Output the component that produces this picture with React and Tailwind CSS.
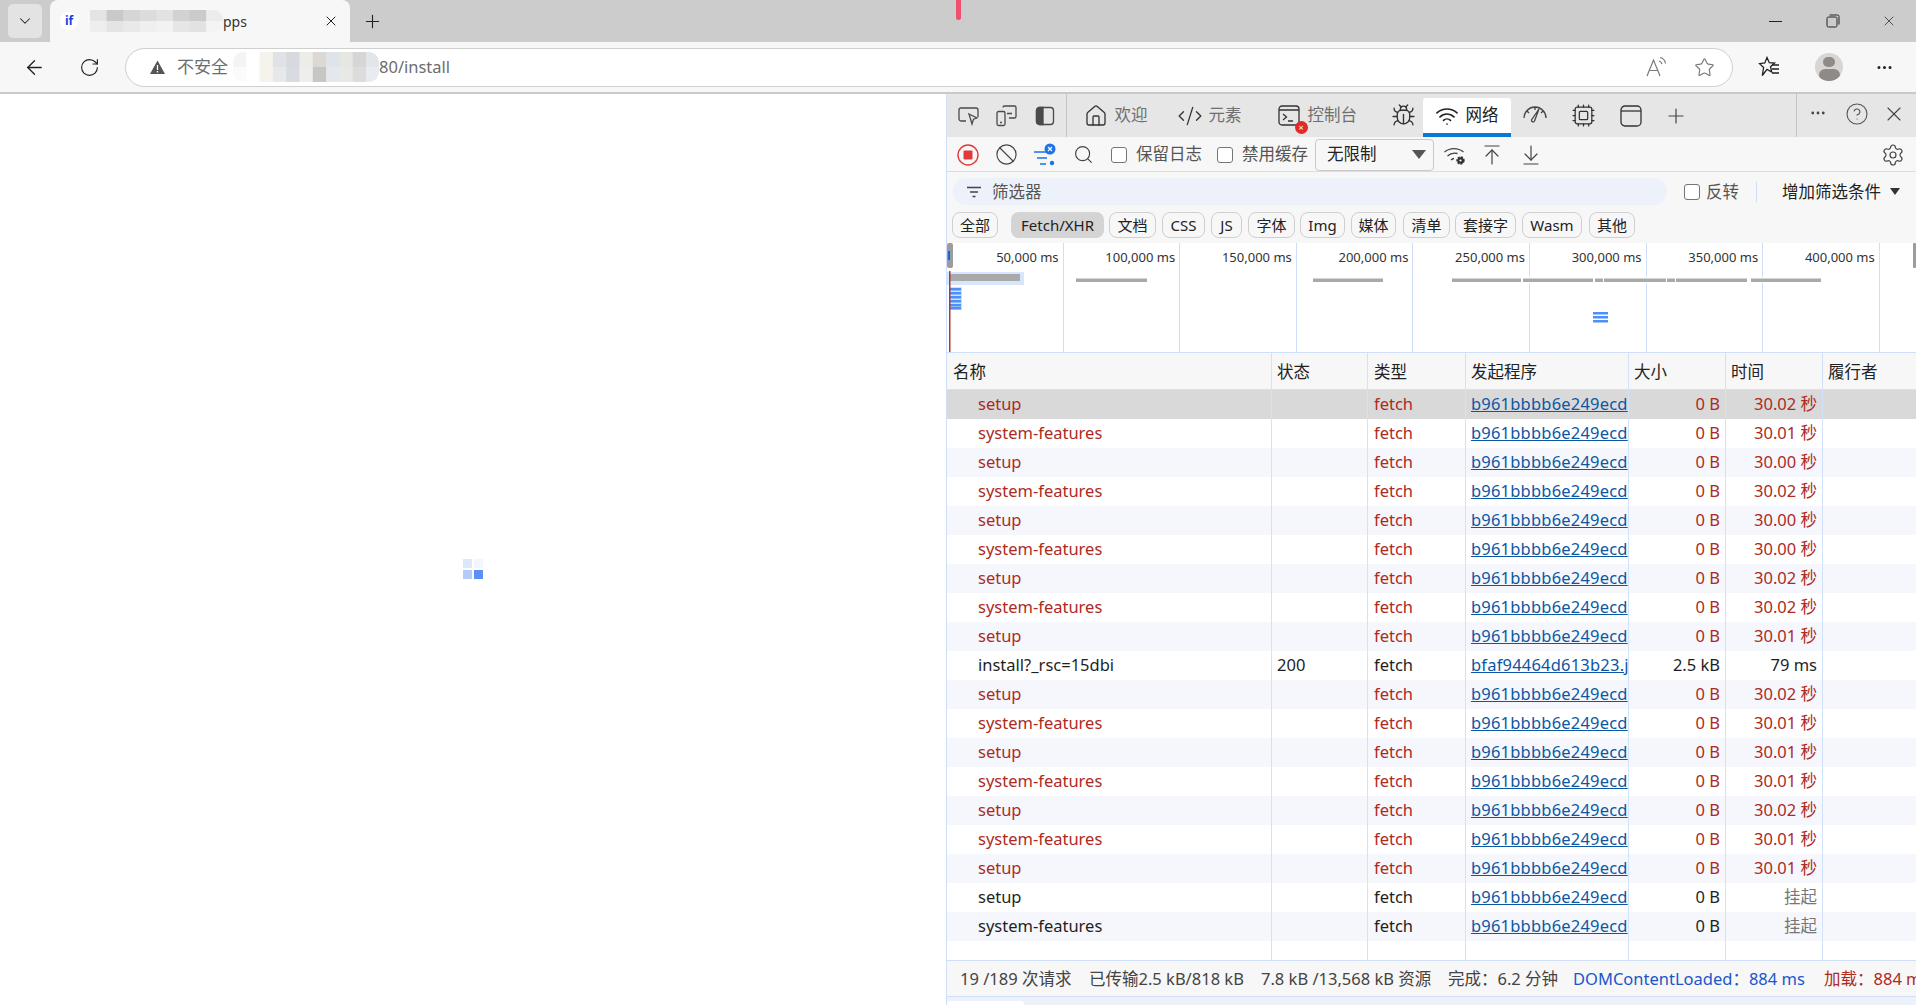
import {
  ArrowLeft,
  ArrowDownToLine,
  ArrowUpToLine,
  Ban,
  Bug,
  ChevronDown,
  CircleHelp,
  CodeXml,
  Cpu,
  Ellipsis,
  House,
  Plus,
  RotateCw,
  Search,
  Settings,
  Star,
  Wifi,
  X,
} from 'lucide-react';

const font = 'font-["Noto_Sans","Noto_Sans_CJK_SC",sans-serif]';

const rows = [
  ['setup', '30.02 秒'],
  ['system-features', '30.01 秒'],
  ['setup', '30.00 秒'],
  ['system-features', '30.02 秒'],
  ['setup', '30.00 秒'],
  ['system-features', '30.00 秒'],
  ['setup', '30.02 秒'],
  ['system-features', '30.02 秒'],
  ['setup', '30.01 秒'],
  ['install?_rsc=15dbi', '79 ms', 'ok'],
  ['setup', '30.02 秒'],
  ['system-features', '30.01 秒'],
  ['setup', '30.01 秒'],
  ['system-features', '30.01 秒'],
  ['setup', '30.02 秒'],
  ['system-features', '30.01 秒'],
  ['setup', '30.01 秒'],
  ['setup', '挂起', 'pending'],
  ['system-features', '挂起', 'pending'],
];

const chips = [
  ['全部', 'w-[46px]'],
  ['Fetch/XHR', 'w-[93px] ml-[13px]'],
  ['文档', 'w-[47px] ml-[5px]'],
  ['CSS', 'w-[43px] ml-[6px]'],
  ['JS', 'w-[31px] ml-[6px]'],
  ['字体', 'w-[47px] ml-[6px]'],
  ['Img', 'w-[45px] ml-[5px]'],
  ['媒体', 'w-[45px] ml-[6px]'],
  ['清单', 'w-[47px] ml-[7px]'],
  ['套接字', 'w-[61px] ml-[5px]'],
  ['Wasm', 'w-[60px] ml-[6px]'],
  ['其他', 'w-[46px] ml-[7px]'],
];

const ticks = ['50,000', '100,000', '150,000', '200,000', '250,000', '300,000', '350,000', '400,000'];

const grayBars = [
  [129, 71], [366, 70], [505, 69], [576, 70], [648, 8], [657, 62], [720, 8], [729, 71], [804, 70],
];

// mosaic colours standing in for the blurred bits of the screenshot
const tabMosaic = [
  ['#e4e4e4', '#c9c9c9', '#d6d6d6', '#dcdcdc', '#e2e2e2', '#d2d2d2', '#cbcbcb', '#ececec'],
  ['#eeeeee', '#e4e4e4', '#e9e9e9', '#efefef', '#f2f2f2', '#e6e6e6', '#e2e2e2', '#f4f4f4'],
];
const urlMosaic = [
  ['#f4f4f4', '#ffffff', '#f6f3ee', '#dfe2e6', '#d6dade', '#ecece8', '#dcd8d4', '#dfe4e8', '#e6e6e2', '#d6d6d6', '#e2e6ea'],
  ['#fbfbfb', '#ffffff', '#f6f2ec', '#e6e8ea', '#d8dce0', '#eeeeec', '#c8c6c4', '#e4e8ec', '#e8e8e6', '#dcdcdc', '#e8ecf0'],
];

const Mosaic = ({ data, width, height, cell }) => (
  <svg width={width} height={height} className="shrink-0">
    {data.map((line, y) =>
      line.map((fill, x) => (
        <rect key={`${x}-${y}`} x={x * cell} y={(y * height) / data.length} width={cell + 1} height={height / data.length + 1} fill={fill} />
      ))
    )}
  </svg>
);

const Check = ({ className = '' }) => (
  <span className={`w-4 h-4 rounded-[3px] border border-[#767676] bg-white shrink-0 ${className}`} />
);

const ToolBtn = ({ children, className = '' }) => (
  <div className={`w-[38.5px] h-full flex items-center justify-center shrink-0 ${className}`}>{children}</div>
);

const InspectIcon = () => (
  <svg width="23" height="23" viewBox="0 0 23 23" fill="none" stroke="#4a4a4a" strokeWidth="1.3">
    <path d="M9 17H4a2 2 0 0 1-2-2V6a2 2 0 0 1 2-2h15a2 2 0 0 1 2 2v7" />
    <path d="M12 10l8 4-3.5 1.2L15 20z" />
  </svg>
);

const DeviceIcon = () => (
  <svg width="23" height="23" viewBox="0 0 23 23" fill="none" stroke="#4a4a4a" strokeWidth="1.3">
    <path d="M8 3.5a1.5 1.5 0 0 1 1.5-1.5h10A1.5 1.5 0 0 1 21 3.5v9a1.5 1.5 0 0 1-1.5 1.5H14" />
    <rect x="2" y="7.5" width="8" height="14" rx="1.5" />
    <path d="M5 18.5h2M12 9.5h5" />
  </svg>
);

const DockIcon = () => (
  <svg width="20" height="20" viewBox="0 0 20 20" fill="none" stroke="#4a4a4a" strokeWidth="1.3">
    <rect x="1.5" y="1.5" width="17" height="17" rx="3" />
    <path d="M1.5 4.5a3 3 0 0 1 3-3H8v17H4.5a3 3 0 0 1-3-3z" fill="#4a4a4a" />
  </svg>
);

const ConsoleIcon = () => (
  <div className="relative w-[22px] h-[22px]">
    <svg width="22" height="22" viewBox="0 0 22 22" fill="none" stroke="#333" strokeWidth="1.3">
      <rect x="1" y="1" width="20" height="19" rx="3" />
      <path d="M1 5h20M5 9l3.5 3L5 15M10 16h5" />
    </svg>
    <span className="absolute right-[-8px] bottom-[-7px] w-[13px] h-[13px] rounded-full bg-[#e02b2b] text-white text-[9px] leading-[13px] text-center">×</span>
  </div>
);

const GaugeIcon = () => (
  <svg width="26" height="22" viewBox="0 0 26 22" fill="none" stroke="#444" strokeWidth="1.3">
    <path d="M2 13a11 11 0 0 1 22 0M5 6l2 2M13 2v3M21 6l-2 2" />
    <path d="M17 4l-4.5 12a1.6 1.6 0 0 1-3-1z" />
  </svg>
);

const AppIcon = () => (
  <svg width="22" height="22" viewBox="0 0 22 22" fill="none" stroke="#333" strokeWidth="1.3">
    <rect x="1" y="1" width="20" height="20" rx="4" />
    <path d="M1 6h20" />
  </svg>
);

const RecordIcon = () => (
  <svg width="22" height="22" viewBox="0 0 22 22">
    <circle cx="11" cy="11" r="10" fill="none" stroke="#e23a3a" strokeWidth="1.4" />
    <rect x="6.5" y="6.5" width="9" height="9" rx="1" fill="#e23a3a" />
  </svg>
);

const FilterActiveIcon = () => (
  <svg width="24" height="24" viewBox="0 0 24 24">
    <path d="M1 9h12M4 15h10M7 21h6" stroke="#1a73e8" strokeWidth="1.4" fill="none" />
    <circle cx="17" cy="6" r="5.5" fill="#1a73e8" />
    <path d="M15 4l4 4M19 4l-4 4" stroke="#fff" strokeWidth="1.2" />
    <circle cx="19" cy="20" r="2.2" fill="#1a73e8" />
  </svg>
);

const WifiGearIcon = () => (
  <svg width="24" height="24" viewBox="0 0 24 24" fill="none" stroke="#444" strokeWidth="1.3">
    <path d="M1.5 9a15 15 0 0 1 19 0M4.5 13a10.5 10.5 0 0 1 10-2.5M8 17a5 5 0 0 1 3-1.5" />
    <circle cx="17.5" cy="17.5" r="3.2" fill="#333" stroke="#333" strokeWidth="2" strokeDasharray="2 1" />
    <circle cx="17.5" cy="17.5" r="1.1" fill="#fff" stroke="none" />
  </svg>
);

const ReadAloudIcon = () => (
  <svg width="22" height="22" viewBox="0 0 22 22" fill="none" stroke="#7a7a7a" strokeWidth="1.2">
    <path d="M1 20L7.5 4 14 20M3.5 14.5h8" />
    <path d="M13 5a4 4 0 0 1 3 3M14 1.5a7 7 0 0 1 5.5 6" />
  </svg>
);

const FavoritesIcon = () => (
  <svg width="22" height="22" viewBox="0 0 22 22" fill="none" stroke="#222" strokeWidth="1.3">
    <path d="M9 1.5l2.3 5.2 5.2.4-4 3.6 1.2 5.3L9 13.4 4.3 19.5l1.3-7.9-4-3.9 5.2-.7z" />
    <path d="M14 9h7M14 13h7M14 17h7" />
  </svg>
);

const RestoreIcon = () => (
  <svg width="14" height="14" viewBox="0 0 14 14" fill="none" stroke="#222" strokeWidth="1">
    <rect x="1" y="3" width="10" height="10" rx="1.5" />
    <path d="M3.5 1h8A1.5 1.5 0 0 1 13 2.5v8" />
  </svg>
);

const FilterLines = () => (
  <svg width="14" height="12" viewBox="0 0 14 12" stroke="#444" strokeWidth="1.3">
    <path d="M0 1.5h14M3 6h8M5.5 10.5h3" />
  </svg>
);

const Timeline = () => (
  <div className="relative h-[110px] bg-white flex overflow-hidden border-b border-[#cfdffa]">
    {ticks.map((tick) => (
      <div key={tick} className="w-[116.6px] h-full shrink-0 border-r border-[#cfdffa] text-right pr-[4px] pt-[5px] text-[13px] leading-[18px] text-[#333]">
        {tick} ms
      </div>
    ))}
    <svg className="absolute inset-0" width="970" height="110">
      <rect x="-2" y="29" width="79" height="13" fill="#d8e6fd" />
      <rect x="2" y="31" width="71" height="7" fill="#a9a9a9" />
      {grayBars.map(([x, w]) => (
        <g key={x}>
          <rect x={x} y="34" width={w} height="6" fill="#fff" />
          <rect x={x} y="35.5" width={w} height="3.5" fill="#a9a9a9" />
        </g>
      ))}
      <rect x="2" y="44" width="13" height="23" fill="#cfe0fd" />
      {[45, 49, 53, 57, 61, 64].map((y) => (
        <rect key={y} x="2" y={y} width="12" height="2.5" fill="#4e90f7" />
      ))}
      {[69, 73, 77].map((y) => (
        <rect key={y} x="646" y={y} width="15" height="2.5" fill="#4e90f7" />
      ))}
      <rect x="2" y="28" width="1.5" height="82" fill="#a83a3a" />
      <rect x="0" y="0" width="6" height="25" rx="2" fill="#9c9c9c" />
      <rect x="1" y="8" width="2" height="9" fill="#1a63d8" />
      <rect x="966" y="0" width="3" height="25" rx="1" fill="#9c9c9c" />
    </svg>
  </div>
);

const cols = 'grid grid-cols-[325px_96px_98px_163px_97px_97px_1fr]';
const cell = 'border-r border-[#d3e2fb] h-full';

const Row = ({ name, time, kind, index }) => {
  const isFail = !kind;
  const bg = index === 0 ? 'bg-[#d9d9d9]' : index % 2 === 0 ? 'bg-[#f5f7fc]' : 'bg-white';
  const color = isFail ? 'text-[#ad2a1f]' : 'text-[#1f1f1f]';
  return (
    <div className={`${cols} h-[29px] leading-[28px] text-[16.5px] ${bg} ${color}`}>
      <div className={`${cell} pl-[31px] overflow-hidden whitespace-nowrap`}>{name}</div>
      <div className={`${cell} pl-[5px]`}>{kind === 'ok' ? '200' : ''}</div>
      <div className={`${cell} pl-[6px]`}>fetch</div>
      <div className={`${cell} pl-[5px] whitespace-nowrap`}>
        <span className="underline text-[#0b57a4] tracking-[0.2px]">{kind === 'ok' ? 'bfaf94464d613b23.j' : 'b961bbbb6e249ecd'}</span>
      </div>
      <div className={`${cell} text-right pr-[5px]`}>{kind === 'ok' ? '2.5 kB' : '0 B'}</div>
      <div className={`${cell} text-right pr-[5px] whitespace-nowrap ${kind === 'pending' ? 'text-[#777]' : ''}`}>{time}</div>
      <div />
    </div>
  );
};

const App = () => {
  return (
    <div className={`${font} relative w-[1916px] h-[1005px] overflow-hidden bg-white text-[16.5px] text-[#222]`}>
      {/* Browser tab strip */}
      <div className="h-[42px] bg-[#cccccc] flex items-end">
        <div className="w-[34px] h-[34px] ml-[8px] mb-[4px] rounded-[5px] bg-[#e3e3e3] flex items-center justify-center">
          <ChevronDown size={18} strokeWidth={1.4} />
        </div>
        <div className="w-[300px] h-[42px] ml-[8px] bg-[#f7f7f7] rounded-t-[8px] flex items-center pl-[10px] pr-[11px]">
          <div className="w-[18px] h-[18px] rounded-full bg-white text-[#1a3fe0] text-[12px] font-bold flex items-center justify-center">if</div>
          <div className="ml-[12px] rounded-r-[10px] overflow-hidden">
            <Mosaic data={tabMosaic} width={133} height={22} cell={16.6} />
          </div>
          <span className="text-[14px] text-[#333]">pps</span>
          <X size={16} strokeWidth={1.5} className="ml-auto" />
        </div>
        <Plus size={21} strokeWidth={1.3} className="ml-[12px] mb-[10px]" />
        <div className="ml-auto flex h-[42px] items-center">
          <div className="w-[58px] flex justify-center"><div className="w-[13px] h-px bg-[#222]" /></div>
          <div className="w-[58px] flex justify-center"><RestoreIcon /></div>
          <div className="w-[54px] flex justify-center"><X size={16} strokeWidth={1.1} /></div>
        </div>
      </div>

      {/* Address bar */}
      <div className="h-[52px] bg-[#f7f7f7] border-b-2 border-[#c9c9c9] flex items-center">
        <ArrowLeft size={23} strokeWidth={1.4} className="ml-[23px]" />
        <RotateCw size={21} strokeWidth={1.3} className="ml-[33px]" />
        <div className="w-[1608px] h-[39px] ml-[25px] bg-white rounded-full border border-[#cfcfcf] flex items-center pl-[24px]">
          <svg width="15" height="14" viewBox="0 0 15 14" className="shrink-0">
            <path d="M7.5 0.5L15 14H0z" fill="#555" />
            <path d="M7.5 5v5M7.5 11v1.5" stroke="#fff" strokeWidth="1.3" />
          </svg>
          <span className="ml-[12px] text-[#6d6d6d] text-[17px]">不安全</span>
          <div className="ml-[5px] overflow-hidden rounded-[10px]">
            <Mosaic data={urlMosaic} width={146} height={30} cell={13.3} />
          </div>
          <span className="text-[#6d6d6d] text-[16.5px]">80/install</span>
          <div className="ml-auto mr-[17px] flex items-center gap-[26px]">
            <ReadAloudIcon />
            <Star size={21} strokeWidth={1.3} className="text-[#777]" />
          </div>
        </div>
        <div className="ml-[25px]"><FavoritesIcon /></div>
        <div className="ml-[35px] w-7 h-7 rounded-full bg-[#d8d6d2] overflow-hidden flex flex-col items-center">
          <div className="w-[12px] h-[12px] rounded-full bg-[#8e8a86] mt-[4px]" />
          <div className="w-[21px] h-[14px] rounded-full bg-[#8e8a86] mt-[2px]" />
        </div>
        <Ellipsis size={19} strokeWidth={1.8} className="ml-[32px]" />
      </div>

      <div className="flex h-[911px]">
        {/* Page: only a spinner */}
        <div className="w-[946px] shrink-0 flex items-center justify-center pt-[39px]">
          <div className="grid grid-cols-2 gap-[2px]">
            <div className="w-[9px] h-[9px] bg-[#dce8fd]" />
            <div className="w-[9px] h-[9px] bg-[#f2f6fe]" />
            <div className="w-[9px] h-[9px] bg-[#b3cdfb]" />
            <div className="w-[9px] h-[9px] bg-[#5b90fb]" />
          </div>
        </div>

        {/* DevTools */}
        <div className="flex-1 min-w-0 flex flex-col border-l border-[#cfdffa] bg-[#f7f7f7]">
          {/* Panel tabs */}
          <div className="h-[43px] bg-[#e6e6e6] flex items-center shrink-0 whitespace-nowrap">
            <ToolBtn className="ml-[2px]"><InspectIcon /></ToolBtn>
            <ToolBtn><DeviceIcon /></ToolBtn>
            <ToolBtn><DockIcon /></ToolBtn>
            <div className="w-px h-full bg-[#c4c4c4] ml-[1px]" />
            <div className="flex items-center text-[#6f6f6f] h-full">
              <House size={24} strokeWidth={1.3} className="ml-[17px] text-[#333]" />
              <span className="ml-[7px] w-[34px]">欢迎</span>
              <CodeXml size={26} strokeWidth={1.2} className="ml-[28px] text-[#333]" />
              <span className="ml-[6px] w-[34px]">元素</span>
              <div className="ml-[35px]"><ConsoleIcon /></div>
              <span className="ml-[8px] w-[50px]">控制台</span>
              <Bug size={25} strokeWidth={1.3} className="ml-[33px] text-[#333]" />
            </div>
            <div className="ml-[7px] w-[88px] h-[39px] mt-[4px] bg-white rounded-t-[3px] border-b-[4px] border-[#0a78d7] flex items-center pl-[12px] text-[#222]">
              <Wifi size={24} strokeWidth={1.7} />
              <span className="ml-[7px]">网络</span>
            </div>
            <div className="ml-[11px]"><GaugeIcon /></div>
            <Cpu size={25} strokeWidth={1.2} className="ml-[23px] text-[#333]" />
            <div className="ml-[24px]"><AppIcon /></div>
            <Plus size={24} strokeWidth={1.2} className="ml-[22px] text-[#444]" />
            <div className="w-px h-full bg-[#c4c4c4] ml-[108px]" />
            <Ellipsis size={18} strokeWidth={1.7} className="ml-[12px] mb-[6px] text-[#444]" />
            <CircleHelp size={24} strokeWidth={1.1} className="ml-[18px] mb-[4px] text-[#555]" />
            <X size={24} strokeWidth={1.1} className="ml-[13px] mb-[4px] text-[#444]" />
          </div>

          {/* Network toolbar */}
          <div className="h-[35px] flex items-center shrink-0 pt-[1px] border-b border-[#cfdffa] text-[#555] whitespace-nowrap">
            <ToolBtn className="ml-[2px]"><RecordIcon /></ToolBtn>
            <ToolBtn><Ban size={23} strokeWidth={1.2} className="text-[#444]" /></ToolBtn>
            <ToolBtn><FilterActiveIcon /></ToolBtn>
            <ToolBtn><Search size={21} strokeWidth={1.3} className="text-[#444]" /></ToolBtn>
            <Check className="ml-[8px]" />
            <span className="ml-[9px] w-[67px]">保留日志</span>
            <Check className="ml-[14px]" />
            <span className="ml-[9px] w-[65px]">禁用缓存</span>
            <div className="ml-[8px] w-[119px] h-[32px] border border-[#c9c9c9] rounded-[4px] flex items-center pl-[11px] pr-[7px] text-[#222]">
              无限制
              <span className="ml-auto w-0 h-0 border-x-[7px] border-x-transparent border-t-[9px] border-t-[#555]" />
            </div>
            <div className="ml-[9px]"><WifiGearIcon /></div>
            <ArrowUpToLine size={24} strokeWidth={1.2} className="ml-[13px] text-[#444]" />
            <ArrowDownToLine size={24} strokeWidth={1.2} className="ml-[15px] text-[#444]" />
            <Settings size={24} strokeWidth={1.2} className="ml-auto mr-[11px] text-[#444]" />
          </div>

          {/* Filter input */}
          <div className="h-[33px] flex items-end shrink-0 pl-[6px] whitespace-nowrap">
            <div className="w-[714px] h-[27px] leading-[29px] rounded-full bg-[#ecf1fa] flex items-center pl-[14px] text-[#555]">
              <FilterLines />
              <span className="ml-[11px]">筛选器</span>
            </div>
            <div className="h-[27px] leading-[29px] flex items-center">
              <Check className="ml-[17px]" />
              <span className="ml-[6px] text-[#555]">反转</span>
              <div className="w-px h-[20px] bg-[#cfdffa] ml-[17px]" />
              <span className="ml-[25px] text-[#222]">增加筛选条件</span>
              <span className="ml-[9px] w-0 h-0 border-x-[5px] border-x-transparent border-t-[7px] border-t-[#333]" />
            </div>
          </div>

          {/* Type chips */}
          <div className="h-[38px] pt-[7px] flex items-start pl-[5px] shrink-0">
            {chips.map(([label, size], i) => (
              <div
                key={label}
                className={`h-[26px] rounded-[8px] flex items-center justify-center text-[15px] leading-none whitespace-nowrap ${size} ${i === 1 ? 'bg-[#d4d4d4]' : 'border border-[#cfcfcf]'}`}
              >
                {label}
              </div>
            ))}
          </div>

          <Timeline />

          {/* Request table */}
          <div className={`${cols} h-[37px] leading-[37px] shrink-0 border-b border-[#d3e2fb] text-[#222]`}>
            <div className={`${cell} pl-[6px]`}>名称</div>
            <div className={`${cell} pl-[5px]`}>状态</div>
            <div className={`${cell} pl-[6px]`}>类型</div>
            <div className={`${cell} pl-[5px]`}>发起程序</div>
            <div className={`${cell} pl-[5px]`}>大小</div>
            <div className={`${cell} pl-[5px]`}>时间</div>
            <div className="pl-[5px]">履行者</div>
          </div>
          <div className="flex flex-col shrink-0 bg-white">
            {rows.map(([name, time, kind], i) => (
              <Row key={i} index={i} name={name} time={time} kind={kind} />
            ))}
          </div>
          <div className={`${cols} h-[19px] bg-white shrink-0`}>
            <div className={cell} />
            <div className={cell} />
            <div className={cell} />
            <div className={cell} />
            <div className={cell} />
            <div className={cell} />
            <div />
          </div>

          {/* Status bar */}
          <div className="h-[37px] shrink-0 border-y border-[#cfdffa] flex items-center pl-[13px] pt-[2px] whitespace-nowrap overflow-hidden text-[#444]">
            <span className="w-[129px] shrink-0">19 /189 次请求</span>
            <span className="w-[172px] shrink-0">已传输2.5 kB/818 kB</span>
            <span className="w-[187px] shrink-0">7.8 kB /13,568 kB 资源</span>
            <span className="w-[125px] shrink-0">完成：6.2 分钟</span>
            <span className="w-[251px] shrink-0 text-[#1a56c9]">DOMContentLoaded：884 ms</span>
            <span className="shrink-0 text-[#ad2a1f]">加载：884 ms</span>
          </div>
          <div className="flex-1 bg-[#ecf1fa] flex items-end">
            <div className="w-[77px] h-[4px] bg-white rounded-t-[3px]" />
          </div>
        </div>
      </div>

      {/* stray mouse mark in the capture */}
      <div className="absolute left-[956px] top-0 w-[5px] h-[20px] rounded-b-full bg-[#f0506e]" />
    </div>
  );
};

export default App;
